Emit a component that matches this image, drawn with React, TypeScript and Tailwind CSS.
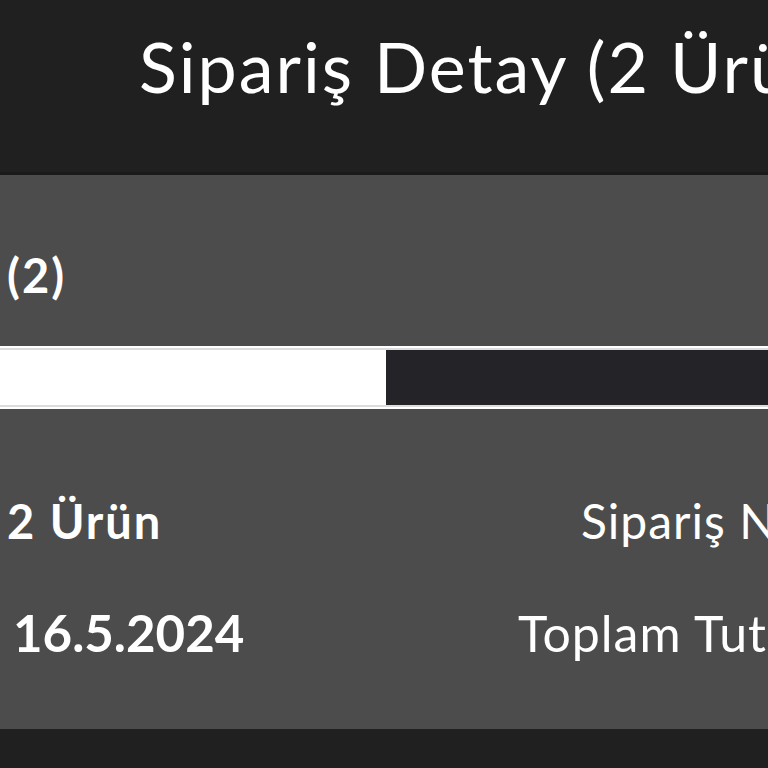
import React from "react";

export default function App() {
  const font = { fontFamily: "Lato, 'Noto Sans', sans-serif" };
  return (
    <div
      className="w-[768px] h-[768px] overflow-hidden bg-[#4c4c4c] flex flex-col text-white"
      style={font}
    >
      <header className="h-[175px] shrink-0 bg-[#202020] border-b-[3px] border-[#1a1a1a] pl-[139px] pt-[31px] overflow-hidden">
        <h1 className="text-[70px] leading-none font-normal whitespace-nowrap tracking-[2px]">
          Sipariş Detay (2 Ürün)
        </h1>
      </header>

      <section className="flex-1 flex flex-col bg-[#4c4c4c] overflow-hidden">
        <div className="h-[171px] shrink-0 pl-[7px] pt-[77px]">
          <span className="text-[47px] leading-none font-bold tracking-[2px]">(2)</span>
        </div>

        <div className="h-[63px] shrink-0 bg-white flex flex-col py-[2px]">
          <div className="flex-1 flex bg-[#dcdcdc] py-[2px]">
            <div className="w-[386px] bg-white" />
            <div className="flex-1 bg-[#242428]" />
          </div>
        </div>

        <div className="flex-1 flex flex-col pt-[88px]">
          <div className="flex items-baseline whitespace-nowrap">
            <span className="w-[581px] shrink-0 pl-[7px] text-[47px] leading-none font-bold tracking-[2px]">
              2 Ürün
            </span>
            <span className="text-[48px] leading-none tracking-[1px]">Sipariş No: 1024</span>
          </div>
          <div className="flex items-baseline whitespace-nowrap mt-[62px]">
            <span className="w-[518px] shrink-0 pl-[13px] text-[51px] leading-none font-bold">
              16.5.2024
            </span>
            <span className="text-[50px] leading-none tracking-[1px]">Toplam Tutar: 250 TL</span>
          </div>
        </div>
      </section>

      <footer className="h-[39px] shrink-0 bg-[#202020]" />
    </div>
  );
}
